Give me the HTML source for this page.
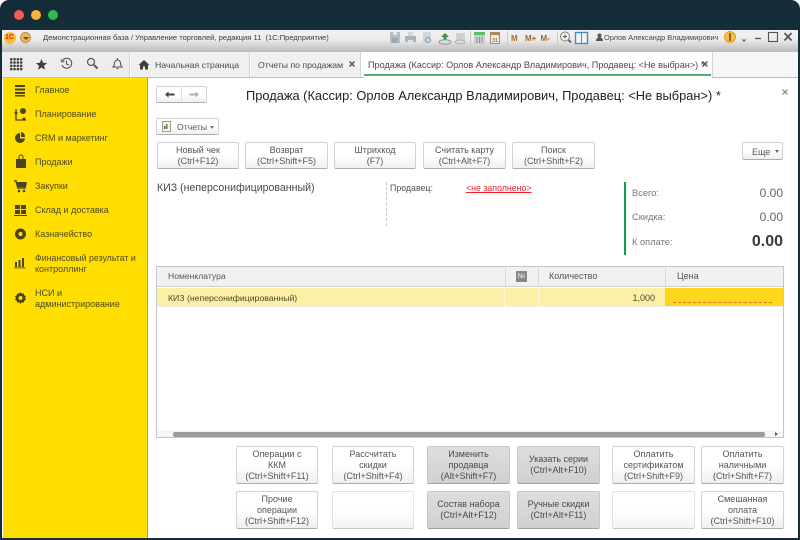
<!DOCTYPE html>
<html><head><meta charset="utf-8">
<style>
html,body{margin:0;padding:0;width:800px;height:540px;overflow:hidden;background:#fff;font-family:"Liberation Sans",sans-serif;color:#4a4a4a}
div,span,svg{position:absolute;box-sizing:border-box}
#w{left:0;top:0;width:800px;height:540px;overflow:hidden;filter:blur(.35px)}
.t{white-space:nowrap;line-height:12px}
.side{left:35px;font-size:9px;color:#4f4a1c;line-height:12px;white-space:nowrap}
.btn{border:1px solid #d2d2d2;border-bottom:1px solid #adadad;border-radius:2px;background:linear-gradient(#fff 50%,#efefef);text-align:center;font-size:9px;line-height:11px;color:#555;display:flex;align-items:center;justify-content:center}
.g{background:linear-gradient(#dedede,#d0d0d0);border-color:#c8c8c8;border-bottom-color:#a0a0a0;color:#4a4a4a}
.e{background:linear-gradient(#fff 50%,#f3f3f3);border-color:#e2e2e2;border-bottom-color:#c8c8c8}
.inner{position:static}
</style></head><body>
<div id="w">
<div style="left:0;top:0;width:800px;height:540px;background:#152c39;border-radius:9px 9px 0 0"></div>
<div style="left:14px;top:10px;width:10px;height:10px;border-radius:50%;background:#f45c56"></div>
<div style="left:31px;top:10px;width:10px;height:10px;border-radius:50%;background:#fbb13c"></div>
<div style="left:48px;top:10px;width:10px;height:10px;border-radius:50%;background:#2fbb4b"></div>

<div style="left:2px;top:30px;width:796px;height:508px;background:#fff"></div>
<!-- title bar -->
<div style="left:2px;top:30px;width:796px;height:22px;background:linear-gradient(#f2f2f2 0,#ebebeb 45%,#bababa 100%)"></div>
<div style="left:4px;top:32px;width:12px;height:12px;border-radius:50%;background:#fbc02d"></div>
<div class="t" style="left:5px;top:33px;font-size:7px;font-weight:bold;color:#d3232a;line-height:10px">1С</div>
<div style="left:20px;top:32px;width:11px;height:11px;border-radius:50%;background:#eeb460;border:1px solid #c89040"></div>
<div style="left:23px;top:37px;border:3px solid transparent;border-top:3px solid #6b4a1a;width:0;height:0"></div>
<div class="t" style="left:43px;top:32px;font-size:7.56px;color:#3d3d3d">Демонстрационная база / Управление торговлей, редакция 11 &nbsp;(1С:Предприятие)</div>
<!-- toolbar icons -->
<svg style="left:385px;top:30px" width="415" height="22" viewBox="0 0 415 22" font-family="Liberation Sans">
<rect x="5" y="2" width="10" height="11" fill="#b4bec6"/><rect x="8" y="2" width="4" height="3" fill="#e4e8ea"/><rect x="7" y="8" width="6" height="5" fill="#9ba8b2"/>
<rect x="20" y="6" width="11" height="6" fill="#aab3ba"/><rect x="23" y="2" width="5" height="4" fill="#d4d8da"/><rect x="23" y="10" width="5" height="4" fill="#dfe2e4"/>
<rect x="38" y="2" width="8" height="11" fill="#d0d6da"/><circle cx="43" cy="10" r="2.500" fill="none" stroke="#8b98a2"/>
<path d="M56 7l4-4 4 4h-2.500v3h-3V7z" fill="#3f8f4c"/>
<ellipse cx="60" cy="12" rx="6" ry="2.300" fill="#d8dcdc" stroke="#9a9a9a"/>
<rect x="71" y="3" width="9" height="10" fill="#ccd2d6"/><ellipse cx="75" cy="12" rx="5" ry="2" fill="#d5d8da" stroke="#b0b0b0"/>
<path d="M85.500 1v16M122.500 1v16M172.500 1v16" stroke="#c9c9c9"/>
<rect x="89" y="2" width="11" height="12" fill="#c9ced2"/><rect x="89" y="2" width="11" height="3" fill="#66b96a"/><path d="M92 7v6M94.500 7v6M97 7v6" stroke="#8f8f8f"/>
<rect x="105.500" y="2.500" width="9" height="11" fill="#f3eee2" stroke="#a78860"/><rect x="105" y="2" width="10" height="3" fill="#b08a5a"/>
<text x="107" y="12" font-size="5.500" fill="#555">31</text>
<text x="126" y="11" font-size="8" font-weight="bold" fill="#a0682f">М</text>
<text x="140" y="11" font-size="8" font-weight="bold" fill="#a0682f">М+</text>
<text x="155.500" y="11" font-size="8" font-weight="bold" fill="#a0682f">М-</text>
<circle cx="180" cy="6.500" r="4.500" fill="#f2f2f2" stroke="#7f7f7f"/><path d="M178 6.500h4M180 4.500v4" stroke="#555"/><path d="M183.500 10l2.500 2.500" stroke="#555" stroke-width="1.800"/>
<rect x="190.500" y="2.500" width="12" height="11" fill="#f4f4f4" stroke="#3f8fd0" stroke-width="1.400"/><path d="M196.500 3v10" stroke="#3f8fd0"/>
<path d="M340.500 1v15M366.500 1v15" stroke="none"/>
<circle cx="345" cy="7" r="5.500" fill="#f4bd4c" stroke="#dca033"/>
<rect x="344" y="3" width="2" height="8" fill="#8a6a24"/>
<path d="M356.500 9.500h5l-2.500 2.500z" fill="#666"/>
<path d="M370 8.500h6" stroke="#555" stroke-width="1.300"/>
<rect x="383.500" y="2.500" width="9" height="9" fill="none" stroke="#555" stroke-width="1.100"/>
<path d="M399.500 3l7 7.500M406.500 3l-7 7.500" stroke="#555" stroke-width="1.700"/>
</svg>
<svg style="left:595px;top:33px" width="9" height="9"><circle cx="4.500" cy="2.500" r="2" fill="#555"/><path d="M1 8c0-5 7-5 7 0z" fill="#555"/></svg>
<div class="t" style="left:604px;top:32px;font-size:7.500px;color:#3f4d5a;letter-spacing:-.05px">Орлов Александр Владимирович</div>

<!-- tab bar -->
<div style="left:2px;top:52px;width:796px;height:26px;background:#fff"></div>
<div style="left:2px;top:52px;width:128px;height:26px;background:#ededed;border-right:1px solid #d4d4d4"></div>
<svg style="left:10px;top:58px" width="13" height="13" viewBox="0 0 13 13" fill="#444">
<rect x="0" y="0" width="2.500" height="2.500" rx=".8"/><rect x="3.300" y="0" width="2.500" height="2.500" rx=".8"/><rect x="6.600" y="0" width="2.500" height="2.500" rx=".8"/><rect x="9.900" y="0" width="2.500" height="2.500" rx=".8"/>
<rect x="0" y="3.300" width="2.500" height="2.500" rx=".8"/><rect x="3.300" y="3.300" width="2.500" height="2.500" rx=".8"/><rect x="6.600" y="3.300" width="2.500" height="2.500" rx=".8"/><rect x="9.900" y="3.300" width="2.500" height="2.500" rx=".8"/>
<rect x="0" y="6.600" width="2.500" height="2.500" rx=".8"/><rect x="3.300" y="6.600" width="2.500" height="2.500" rx=".8"/><rect x="6.600" y="6.600" width="2.500" height="2.500" rx=".8"/><rect x="9.900" y="6.600" width="2.500" height="2.500" rx=".8"/>
<rect x="0" y="9.900" width="2.500" height="2.500" rx=".8"/><rect x="3.300" y="9.900" width="2.500" height="2.500" rx=".8"/><rect x="6.600" y="9.900" width="2.500" height="2.500" rx=".8"/><rect x="9.900" y="9.900" width="2.500" height="2.500" rx=".8"/></svg>
<svg style="left:35px;top:58px" width="13" height="13" viewBox="0 0 13 13"><path d="M6.500 1l1.600 3.800 4 .3-3.100 2.600 1 4-3.500-2.200-3.500 2.200 1-4L.9 5.100l4-.3z" fill="#3f3f3f"/></svg>
<svg style="left:60px;top:57px" width="13" height="13" viewBox="0 0 13 13" fill="none" stroke="#555" stroke-width="1.100"><path d="M2.500 3.500A5 5 0 1 1 2 8"/><path d="M1 2.500l1 2.500 2.500-1"/><path d="M6.500 3.500v3.500l2.500 1"/></svg>
<svg style="left:86px;top:57px" width="13" height="13" viewBox="0 0 13 13" fill="none" stroke="#555" stroke-width="1.200"><circle cx="5" cy="5" r="3.500"/><path d="M8 8l3.500 3.500" stroke-width="2"/></svg>
<svg style="left:111px;top:57px" width="13" height="13" viewBox="0 0 13 13" fill="none" stroke="#555" stroke-width="1.100"><path d="M2 10c1.200-1 1.500-2 1.500-4a3 3 0 0 1 6 0c0 2 .3 3 1.500 4z"/><path d="M5.500 11.500h2M6.500 1v1.500"/></svg>

<div style="left:131px;top:52px;width:119px;height:25px;background:#f0f0f0;border-right:1px solid #d4d4d4"></div>
<svg style="left:138px;top:59px" width="12" height="11" viewBox="0 0 12 11"><path d="M6 1L.5 6H2v4.500h3V7.500h2v3h3V6h1.500z" fill="#3f3f3f"/></svg>
<div class="t" style="left:155px;top:59px;font-size:8.700px;color:#4a4a4a">Начальная страница</div>
<div style="left:251px;top:52px;width:110px;height:25px;background:#f0f0f0;border-right:1px solid #d4d4d4"></div>
<div class="t" style="left:258px;top:59px;font-size:8.700px;color:#4a4a4a">Отчеты по продажам</div>
<svg style="left:348px;top:60px" width="8" height="8"><path d="M1.500 1.500l5 5M6.500 1.500l-5 5" stroke="#555" stroke-width="1.500"/></svg>
<div class="t" style="left:368px;top:59px;font-size:9.100px;color:#4a4a4a">Продажа (Кассир: Орлов Александр Владимирович, Продавец: &lt;Не выбран&gt;) *</div>
<svg style="left:701px;top:60px" width="8" height="8"><path d="M1.500 1.500l5 5M6.500 1.500l-5 5" stroke="#555" stroke-width="1.500"/></svg>
<div style="left:364px;top:74px;width:347px;height:2px;background:#4fae72"></div>
<div style="left:712px;top:52px;width:86px;height:26px;background:#f6f6f6;border-left:1px solid #d4d4d4"></div>
<div style="left:2px;top:77px;width:362px;height:1px;background:#bdbdbd"></div>
<div style="left:712px;top:77px;width:86px;height:1px;background:#bdbdbd"></div>

<!-- sidebar -->
<div style="left:3px;top:78px;width:144px;height:460px;background:#ffde00"></div>
<div style="left:147px;top:78px;width:1px;height:460px;background:#9a9a9a"></div>
<svg style="left:14px;top:84px" width="14" height="220" viewBox="0 0 14 220" fill="#4a4520">
<rect x="1" y="1" width="10" height="2"/><rect x="1" y="4.500" width="10" height="2"/><rect x="1" y="8" width="10" height="2"/><rect x="1" y="11" width="10" height="1.500"/>
<path d="M2 25v11h10" fill="none" stroke="#4a4520" stroke-width="1.300"/><circle cx="9" cy="27" r="3"/><circle cx="2" cy="29" r="1.500"/><circle cx="10" cy="35" r="1.500"/>
<path d="M6 49a5 5 0 1 0 5 5.500H6z"/><path d="M7 48a4.500 4.500 0 0 1 4 5H7z"/>
<path d="M2 75h10v9H2z"/><path d="M5 75v-2a2 2 0 0 1 4 0v2" fill="none" stroke="#4a4520"/>
<path d="M0 97h2l2 7h7l1-5H4" fill="none" stroke="#4a4520" stroke-width="1.500"/><path d="M3 98h9l-1 5H4z"/><circle cx="5" cy="107" r="1.300"/><circle cx="10" cy="107" r="1.300"/>
<rect x="1" y="121" width="5" height="4"/><rect x="7" y="121" width="5" height="4"/><rect x="1" y="126" width="5" height="4"/><rect x="7" y="126" width="5" height="4"/><rect x="0" y="131" width="13" height="1"/>
<circle cx="6.500" cy="150" r="5.500"/><circle cx="6.500" cy="150" r="2" fill="#ffde00"/>
<rect x="1" y="178" width="2" height="5"/><rect x="4.500" y="176" width="2" height="7"/><rect x="8" y="174" width="2" height="9"/><rect x="0" y="183.500" width="12" height=".8"/>
<path d="M6.500 208l1.200 1.800 2-.5.500 2 1.800 1-1 1.700 1 1.700-1.800 1-.5 2-2-.5-1.200 1.800-1.200-1.800-2 .5-.5-2-1.800-1 1-1.700-1-1.700 1.800-1 .5-2 2 .5z"/><circle cx="6.500" cy="214" r="2" fill="#ffde00"/>
</svg>
<div class="side" style="top:84px">Главное</div>
<div class="side" style="top:108px">Планирование</div>
<div class="side" style="top:132px">CRM и маркетинг</div>
<div class="side" style="top:156px">Продажи</div>
<div class="side" style="top:180px">Закупки</div>
<div class="side" style="top:204px">Склад и доставка</div>
<div class="side" style="top:228px">Казначейство</div>
<div class="side" style="top:252px;font-size:8.800px">Финансовый результат и</div>
<div class="side" style="top:263px">контроллинг</div>
<div class="side" style="top:287px">НСИ и</div>
<div class="side" style="top:298px">администрирование</div>

<!-- content header -->
<div class="btn" style="left:156px;top:86px;width:51px;height:17px"></div>
<div style="left:181px;top:87px;width:1px;height:15px;background:#e0e0e0"></div>
<svg style="left:164px;top:90px" width="12" height="9"><path d="M1 4.500L4.500 1.500v2h6v2h-6v2z" fill="#3f3f3f"/></svg>
<svg style="left:188px;top:90px" width="12" height="9"><path d="M11 4.500L7.500 1.500v2h-6v2h6v2z" fill="#b0b0b0"/></svg>
<div class="t" style="left:246px;top:88px;font-size:12.850px;line-height:15px;color:#222">Продажа (Кассир: Орлов Александр Владимирович, Продавец: &lt;Не выбран&gt;) *</div>
<svg style="left:781px;top:88px" width="8" height="8"><path d="M1.500 1.500l5 5M6.500 1.500l-5 5" stroke="#777" stroke-width="1"/></svg>

<div class="btn" style="left:156px;top:118px;width:63px;height:17px"></div>
<svg style="left:162px;top:121px" width="10" height="11"><rect x=".5" y=".5" width="8" height="10" fill="#f4f4f4" stroke="#999"/><rect x="2" y="5" width="1.500" height="3" fill="#c33"/><rect x="4" y="3" width="1.500" height="5" fill="#393"/></svg>
<div class="t" style="left:177px;top:121px;font-size:8.700px;color:#555">Отчеты</div>
<div style="left:210px;top:126px;border:2.500px solid transparent;border-top:3px solid #777;width:0;height:0"></div>

<div class="btn" style="left:157px;top:142px;width:82px;height:27px"><span class="inner">Новый чек<br>(Ctrl+F12)</span></div>
<div class="btn" style="left:245px;top:142px;width:83px;height:27px"><span class="inner">Возврат<br>(Ctrl+Shift+F5)</span></div>
<div class="btn" style="left:334px;top:142px;width:82px;height:27px"><span class="inner">Штрихкод<br>(F7)</span></div>
<div class="btn" style="left:423px;top:142px;width:83px;height:27px"><span class="inner">Считать карту<br>(Ctrl+Alt+F7)</span></div>
<div class="btn" style="left:512px;top:142px;width:83px;height:27px"><span class="inner">Поиск<br>(Ctrl+Shift+F2)</span></div>
<div class="btn" style="left:742px;top:142px;width:41px;height:18px"></div>
<div class="t" style="left:752px;top:146px;font-size:9px;color:#555">Еще</div>
<div style="left:775px;top:150px;border:2.500px solid transparent;border-top:3px solid #666;width:0;height:0"></div>

<div class="t" style="left:157px;top:182px;font-size:10.600px;line-height:13px;color:#4a4a4a">КИЗ (неперсонифицированный)</div>
<div style="left:386px;top:182px;width:0;height:44px;border-left:1px dashed #c8c8c8"></div>
<div class="t" style="left:390px;top:182px;font-size:8.800px;color:#555">Продавец:</div>
<div class="t" style="left:466px;top:182px;font-size:8.800px;color:#f5222d;text-decoration:underline">&lt;не заполнено&gt;</div>

<div style="left:624px;top:182px;width:2px;height:73px;background:#11a04a"></div>
<div class="t" style="left:632px;top:187px;font-size:9.300px;color:#777">Всего:</div>
<div class="t" style="left:632px;top:211px;font-size:9.300px;color:#777">Скидка:</div>
<div class="t" style="left:632px;top:236px;font-size:9.300px;color:#777">К оплате:</div>
<div class="t" style="left:723px;width:60px;text-align:right;top:186px;font-size:12px;line-height:14px;color:#666">0.00</div>
<div class="t" style="left:723px;width:60px;text-align:right;top:210px;font-size:12px;line-height:14px;color:#666">0.00</div>
<div class="t" style="left:723px;width:60px;text-align:right;top:233px;font-size:16px;line-height:18px;font-weight:bold;color:#3a3a3a">0.00</div>

<!-- table -->
<div style="left:156px;top:266px;width:628px;height:172px;border:1px solid #c6c6c6;background:#fff"></div>
<div style="left:157px;top:267px;width:626px;height:20px;background:#f1f1f1;border-bottom:1px solid #cfcfcf"></div>
<div style="left:505px;top:267px;width:1px;height:20px;background:#d9d9d9"></div>
<div style="left:538px;top:267px;width:1px;height:20px;background:#d9d9d9"></div>
<div style="left:665px;top:267px;width:1px;height:20px;background:#d9d9d9"></div>
<div class="t" style="left:168px;top:270px;font-size:8.600px;color:#555">Номенклатура</div>
<div style="left:516px;top:271px;width:11px;height:11px;background:#888;color:#eee;font-size:7px;line-height:11px;text-align:center">№</div>
<div class="t" style="left:549px;top:270px;font-size:9px;color:#555">Количество</div>
<div class="t" style="left:677px;top:270px;font-size:9px;color:#555">Цена</div>
<div style="left:157px;top:288px;width:626px;height:19px;background:#fdf0a6;border-bottom:1px solid #ececec"></div>
<div style="left:504px;top:288px;width:1px;height:19px;background:#fff9d8"></div>
<div style="left:538px;top:288px;width:1px;height:19px;background:#fff9d8"></div>
<div class="t" style="left:168px;top:292px;font-size:8.700px;color:#4a4a2a">КИЗ (неперсонифицированный)</div>
<div class="t" style="left:600px;width:55px;text-align:right;top:292px;font-size:9px;color:#4a4a2a">1,000</div>
<div style="left:665px;top:288px;width:118px;height:18px;background:#fcd71e"></div>
<div style="left:673px;top:302px;width:99px;height:0;border-top:1px dashed #e5741f"></div>
<!-- scrollbar -->
<div style="left:157px;top:430px;width:626px;height:7px;background:#f6f6f6"></div>
<div style="left:173px;top:432px;width:592px;height:5px;background:#9c9c9c;border-radius:2px"></div>
<div style="left:775px;top:432px;border:2px solid transparent;border-left:3px solid #555;width:0;height:0"></div>

<!-- bottom buttons -->
<div class="btn" style="left:236px;top:446px;width:82px;height:38px"><span class="inner">Операции с<br>ККМ<br>(Ctrl+Shift+F11)</span></div>
<div class="btn" style="left:332px;top:446px;width:82px;height:38px"><span class="inner">Рассчитать<br>скидки<br>(Ctrl+Shift+F4)</span></div>
<div class="btn g" style="left:427px;top:446px;width:83px;height:38px"><span class="inner">Изменить<br>продавца<br>(Alt+Shift+F7)</span></div>
<div class="btn g" style="left:517px;top:446px;width:83px;height:38px"><span class="inner">Указать серии<br>(Ctrl+Alt+F10)</span></div>
<div class="btn" style="left:612px;top:446px;width:83px;height:38px"><span class="inner">Оплатить<br>сертификатом<br>(Ctrl+Shift+F9)</span></div>
<div class="btn" style="left:701px;top:446px;width:83px;height:38px"><span class="inner">Оплатить<br>наличными<br>(Ctrl+Shift+F7)</span></div>
<div class="btn" style="left:236px;top:491px;width:82px;height:38px"><span class="inner">Прочие<br>операции<br>(Ctrl+Shift+F12)</span></div>
<div class="btn e" style="left:332px;top:491px;width:82px;height:38px"></div>
<div class="btn g" style="left:427px;top:491px;width:83px;height:38px"><span class="inner">Состав набора<br>(Ctrl+Alt+F12)</span></div>
<div class="btn g" style="left:517px;top:491px;width:83px;height:38px"><span class="inner">Ручные скидки<br>(Ctrl+Alt+F11)</span></div>
<div class="btn e" style="left:612px;top:491px;width:83px;height:38px"></div>
<div class="btn" style="left:701px;top:491px;width:83px;height:38px"><span class="inner">Смешанная<br>оплата<br>(Ctrl+Shift+F10)</span></div>
</div>
</body></html>
